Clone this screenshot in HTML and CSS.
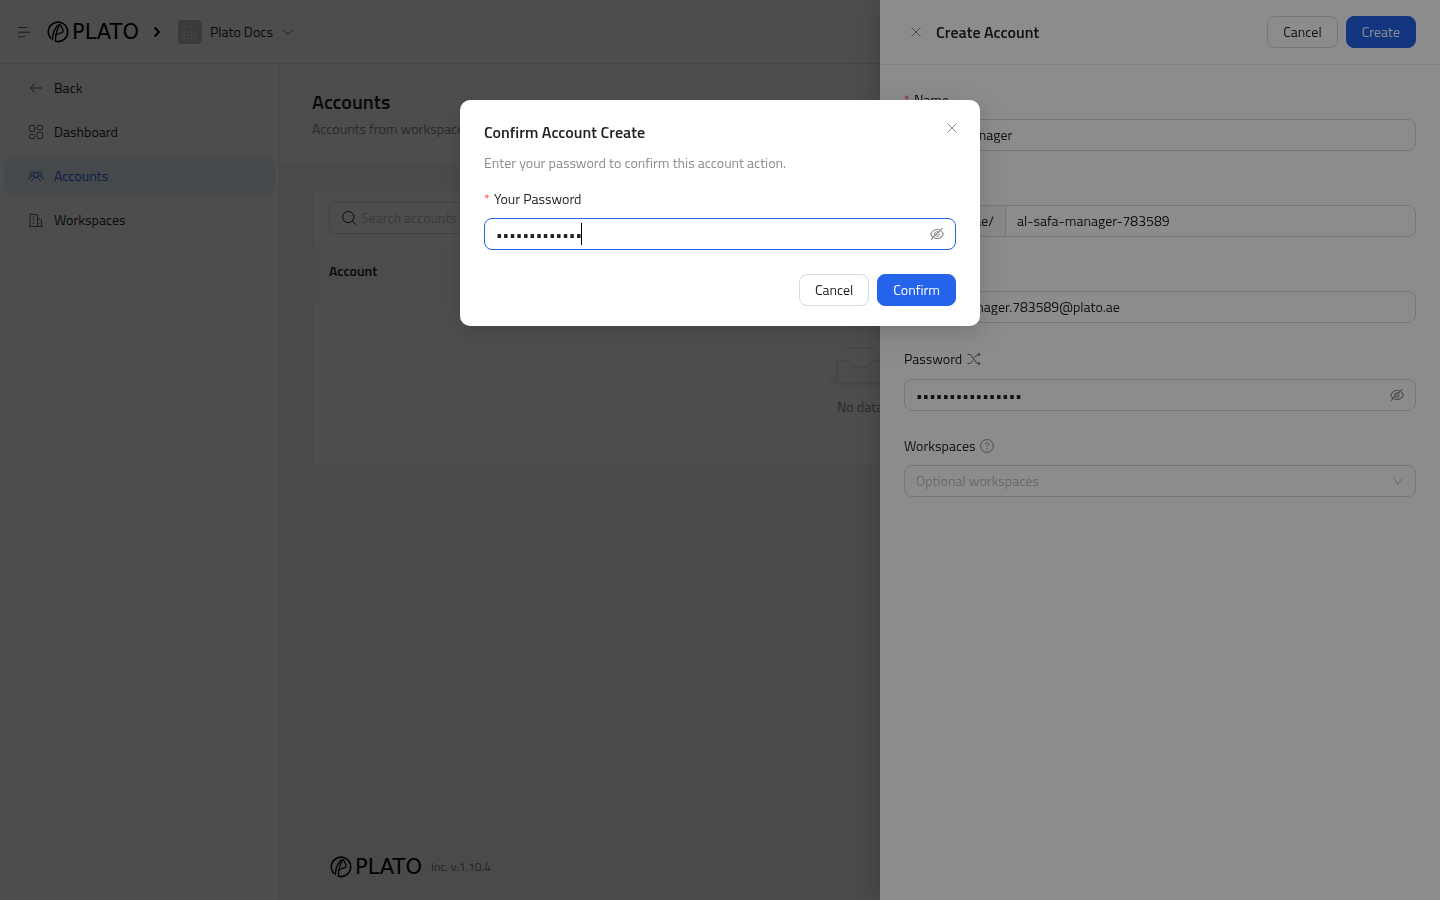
FILE: index.html
```html
<!DOCTYPE html>
<html lang="en">
<head>
<meta charset="utf-8">
<meta name="viewport" content="width=device-width, initial-scale=1">
<title>Plato – Accounts</title>
<link rel="stylesheet" href="styles.css">
</head>
<body>
<svg class="sprite" aria-hidden="true">
  <symbol id="mark" viewBox="0 0 22 22"><g fill="none" stroke="currentColor" stroke-linecap="round" stroke-linejoin="round"><path stroke-width="1.6" d="M3.600 17.200A9.700 9.700 0 1 1 8.600 20.300"/><path stroke-width="1.300" d="M5.400 18.600C5.400 15 6 11.500 8 8.200L10.300 4.800Q11 3.800 12.200 3.900L13 4Q13.800 4.100 14.200 5L16 9.200Q16.600 11 14.600 11.700L8.200 13.900M12.200 5.200C9.600 9 8.600 13.500 8.400 19.800"/></g></symbol>
  <symbol id="building" viewBox="0 0 16 16"><path d="M2 14.5V1.8L9.5 3v11.5M9.5 6.5l4 1.800v6.200M.8 14.500h14.400M4.500 5.200h2.200M4.500 8h2.200M4.500 11h2.200M11.600 11v1.200" fill="none" stroke="currentColor"/></symbol>
  <symbol id="close" viewBox="0 0 14 14"><path d="m2.500 2.500 9 9m0-9-9 9" fill="none" stroke="currentColor"/></symbol>
  <symbol id="chevron" viewBox="0 0 14 14"><path d="m2 4.500 5 5 5-5" fill="none" stroke="currentColor"/></symbol>
  <symbol id="eye-off" viewBox="64 64 896 896"><path fill="currentColor" d="M942.2 486.2Q889.47 375.11 816.7 305l-50.88 50.88C807.31 395.53 843.45 447.4 874.7 512 791.5 684.2 673.4 766 512 766q-72.67 0-133.87-22.38L323 798.75Q408 838 512 838q288.3 0 430.2-300.3a60.29 60.29 0 000-51.5zm-63.57-320.64L836 122.88a8 8 0 00-11.32 0L715.31 232.2Q624.86 186 512 186q-288.3 0-430.2 300.3a60.3 60.3 0 000 51.5q56.69 119.4 136.5 191.41L112.48 835a8 8 0 000 11.31L155.17 889a8 8 0 0011.31 0l712.15-712.12a8 8 0 000-11.32zM149.3 512C232.6 339.8 350.7 258 512 258c54.54 0 104.13 9.36 149.12 28.39l-70.3 70.3a176 176 0 00-238.13 238.13l-83.42 83.42C223.1 637.49 183.3 582.28 149.3 512zm246.7 0a112.11 112.11 0 01146.2-106.69L401.31 546.2A112 112 0 01396 512z"/><path fill="currentColor" d="M508 624c-3.46 0-6.87-.16-10.25-.47l-52.82 52.82a176.09 176.09 0 00227.42-227.42l-52.82 52.82c.31 3.38.47 6.79.47 10.25a111.94 111.94 0 01-112 112z"/></symbol>
</svg>

<div class="app">
  <header class="topbar">
    <button class="icon-button" aria-label="Toggle menu"><svg class="icon-16" viewBox="0 0 16 16"><path d="M2 3.5h9M2 8.2h12M2 12.8h7" fill="none" stroke="currentColor"/></svg></button>
    <a class="logo" href="#"><svg class="logo-mark"><use href="#mark"/></svg><span class="logo-word">PLATO</span></a>
    <svg class="crumb" viewBox="0 0 10 12"><path d="m2.5 1.5 4.5 4.5-4.500 4.500" fill="none" stroke="currentColor" stroke-width="2"/></svg>
    <button class="team"><span class="team-avatar"><svg class="icon-16"><use href="#building"/></svg></span>Plato Docs<svg class="icon-14 team-arrow"><use href="#chevron"/></svg></button>
  </header>
  <div class="columns">
    <nav class="sidebar">
      <a class="nav-item" href="#"><svg class="icon-16" viewBox="0 0 16 16"><path d="M2.500 8h11.500M7 3.500 2.500 8 7 12.500" fill="none" stroke="currentColor"/></svg>Back</a>
      <a class="nav-item" href="#"><svg class="icon-16" viewBox="0 0 16 16"><g fill="none" stroke="currentColor"><rect x="1.500" y="1.500" width="5" height="6" rx="1.200"/><rect x="9" y="1.500" width="5.500" height="4" rx="1.200"/><rect x="1.500" y="10.500" width="5" height="4" rx="1.200"/><rect x="9" y="8" width="5.500" height="6.500" rx="1.200"/></g></svg>Dashboard</a>
      <a class="nav-item nav-current" href="#"><svg class="icon-16" viewBox="0 0 16 16"><g fill="none" stroke="currentColor"><circle cx="8" cy="7" r="2.500"/><path d="M3.700 13.300c.4-2.500 2-3.800 4.300-3.800s3.900 1.300 4.300 3.800M5.900 4.500A2.100 2.100 0 1 0 4.300 7.900C2.200 8 1 9.400.7 11.500M10.100 4.500a2.100 2.100 0 1 1 1.600 3.400c2.100.1 3.300 1.500 3.600 3.600"/></g></svg>Accounts</a>
      <a class="nav-item" href="#"><svg class="icon-16"><use href="#building"/></svg>Workspaces</a>
    </nav>
    <main class="content">
      <div class="page-head">
        <h1 class="page-title">Accounts</h1>
        <p class="page-note">Accounts from workspaces</p>
      </div>
      <section class="card">
        <label class="search"><svg class="icon-16" viewBox="0 0 16 16"><path d="M7.300 1.500a5.600 5.600 0 1 0 0 11.200 5.600 5.600 0 0 0 0-11.200zM11.300 11.200l3.500 3.500" fill="none" stroke="currentColor"/></svg><input class="search-input" type="search" placeholder="Search accounts..." aria-label="Search accounts"></label>
        <table class="table">
          <thead><tr><th>Account</th></tr></thead>
          <tbody><tr><td>
            <div class="empty">
              <svg class="empty-art" viewBox="0 0 64 41"><g transform="translate(0 1)"><ellipse fill="#f5f5f5" cx="32" cy="33" rx="32" ry="7"/><g fill-rule="nonzero" stroke="#d9d9d9"><path fill="#fff" d="M55 12.760L44.854 1.258C44.367.474 43.656 0 42.907 0H21.093c-.749 0-1.460.474-1.947 1.257L9 12.761V22h46v-9.240z"/><path fill="#fafafa" d="M41.613 15.931c0-1.605.994-2.930 2.227-2.931H55v18.137C55 33.260 53.680 35 52.050 35h-40.100C10.320 35 9 33.259 9 31.137V13h11.160c1.233 0 2.227 1.323 2.227 2.928v.022c0 1.605 1.005 2.901 2.237 2.901h14.752c1.232 0 2.237-1.308 2.237-2.913v-.007z"/></g></g></svg>
              No data
            </div>
          </td></tr></tbody>
        </table>
      </section>
      <footer class="footer"><span class="logo"><svg class="logo-mark"><use href="#mark"/></svg><span class="logo-word">PLATO</span></span><span class="version">Inc. v.1.10.4</span></footer>
    </main>
  </div>
</div>

<div class="mask"></div>
<aside class="drawer" aria-labelledby="drawer-title">
  <header class="drawer-head">
    <button class="drawer-close" aria-label="Close"><svg class="icon-14"><use href="#close"/></svg></button>
    <h2 class="panel-title" id="drawer-title">Create Account</h2>
    <div class="actions"><button class="button">Cancel</button><button class="button button-primary">Create</button></div>
  </header>
  <form class="drawer-form">
    <div class="field">
      <label class="label required" for="name">Name</label>
      <input class="control" id="name" value="Al Safa Manager">
    </div>
    <div class="field">
      <label class="label required" for="username">Username</label>
      <div class="control-group"><span class="addon">my.plato.ae/</span><input class="control" id="username" value="al-safa-manager-783589"></div>
    </div>
    <div class="field">
      <label class="label required" for="email">Email</label>
      <input class="control" id="email" value="alsafa-manager.783589@plato.ae">
    </div>
    <div class="field">
      <div class="label-row"><label for="password">Password</label><button class="icon-button" type="button" aria-label="Generate password"><svg class="icon-14" viewBox="0 0 14 14"><path d="M.5 2.500h1.800c1 0 1.600.4 2.200 1.200l4.600 6.600c.6.800 1.200 1.200 2.200 1.200h1.500M.5 11.500h1.800c1 0 1.600-.4 2.200-1.200l1.200-1.700M8 5.400l1.200-1.700c.6-.8 1.200-1.200 2.200-1.200h1.500M11.300.8 13 2.500 11.300 4.200M11.300 9.800l1.700 1.700-1.700 1.700" fill="none" stroke="currentColor"/></svg></button></div>
      <div class="control secret"><input class="secret-input" id="password" type="password" value="plato-7835-safa1"><button class="icon-button eye" type="button" aria-label="Show password"><svg class="icon-14"><use href="#eye-off"/></svg></button></div>
    </div>
    <div class="field">
      <label class="label" for="workspaces">Workspaces <svg class="icon-14 help" viewBox="0 0 14 14"><g fill="none" stroke="currentColor"><circle cx="7" cy="7" r="6.400"/><path d="M5.300 5.700c0-1.100.7-1.800 1.700-1.800s1.700.7 1.700 1.600c0 1.300-1.700 1.300-1.700 2.700M7 9.300v1.100"/></g></svg></label>
      <div class="select-wrap"><select class="control select" id="workspaces"><option>Optional workspaces</option></select><svg class="icon-14 select-arrow" viewBox="0 0 14 14"><path d="m2.500 3.500 4.500 6.700 4.500-6.700" fill="none" stroke="currentColor"/></svg></div>
    </div>
  </form>
</aside>

<div class="mask modal-layer">
  <form class="modal" role="dialog" aria-labelledby="modal-title">
    <button class="modal-close" type="button" aria-label="Close"><svg class="icon-14"><use href="#close"/></svg></button>
    <h2 class="panel-title" id="modal-title">Confirm Account Create</h2>
    <p class="modal-note">Enter your password to confirm this account action.</p>
    <label class="label required" for="confirm">Your Password</label>
    <div class="control secret secret-focus"><input class="secret-input" id="confirm" type="password" value="plato-admin-1"><span class="caret"></span><button class="icon-button eye" type="button" aria-label="Show password"><svg class="icon-14"><use href="#eye-off"/></svg></button></div>
    <div class="modal-actions"><button class="button" type="button">Cancel</button><button class="button button-primary" type="button">Confirm</button></div>
  </form>
</div>
</body>
</html>
```
FILE: styles.css
```css
* { box-sizing: border-box; }

body {
  margin: 0;
  background: #fff;
  color: #1f1f1f;
  font: 14px/22px "Titillium Web", Lato, sans-serif;
}

h1, h2, p { margin: 0; }
a { color: inherit; text-decoration: none; }
button, input, select { font: inherit; color: inherit; }
svg { display: block; flex: none; }

.sprite { position: absolute; width: 0; height: 0; }
.icon-16 { width: 16px; height: 16px; }
.icon-14 { width: 14px; height: 14px; }

.icon-button {
  display: flex;
  padding: 0;
  border: 0;
  background: none;
  color: #595959;
}

/* Page frame */
.app { display: flex; flex-direction: column; min-height: 100vh; }

.topbar {
  display: flex;
  align-items: center;
  height: 64px;
  padding: 0 16px;
  border-bottom: 1px solid #e5e5e5;
}

.logo { display: flex; align-items: center; gap: 3px; color: #000; }
.topbar .logo { margin-left: 15px; }
.logo-mark { width: 22px; height: 22px; }
.logo-word { font: 21px/22px "DejaVu Sans", sans-serif; }
.crumb { width: 10px; height: 12px; margin: 0 16px 0 13px; color: #000; }

.team {
  display: flex;
  align-items: center;
  gap: 8px;
  padding: 0;
  border: 0;
  background: none;
}
.team-avatar {
  display: flex;
  align-items: center;
  justify-content: center;
  width: 24px;
  height: 24px;
  border-radius: 4px;
  background: #bfbfbf;
  color: #e5e5e5;
}
.team-arrow { color: #595959; }

.columns { display: flex; flex: 1; }

.sidebar {
  flex: 0 0 280px;
  display: flex;
  flex-direction: column;
  gap: 4px;
  padding: 4px;
  border-right: 1px solid #eaeaea;
}
.nav-item {
  display: flex;
  align-items: center;
  gap: 10px;
  height: 40px;
  padding: 0 24px;
  border-radius: 10px;
}
.nav-item svg { color: #595959; }
.nav-current { background: #e8f1f8; color: #2563eb; }
.nav-current svg { color: #2563eb; }

.content {
  flex: 1;
  display: flex;
  flex-direction: column;
  background: #f5f5f5;
}
.page-head {
  padding: 24px 32px;
  border-bottom: 1px solid #eee;
  background: #fff;
}
.page-title { font-size: 20px; line-height: 28px; font-weight: 600; }
.page-note { margin-top: 2px; color: #8c8c8c; }

.card {
  margin: 24px 32px;
  border: 1px solid #ededed;
  border-radius: 8px;
  background: #fff;
  overflow: hidden;
}
.search {
  display: flex;
  align-items: center;
  gap: 4px;
  width: 280px;
  height: 32px;
  margin: 12px 16px 10px;
  padding: 0 11px;
  border: 1px solid #d9d9d9;
  border-radius: 6px;
}
.search-input { flex: 1; min-width: 0; padding: 0; border: 0; background: none; outline: 0; }
.search-input::placeholder { color: #bfbfbf; }

.table { width: 100%; border-collapse: collapse; }
.table th {
  height: 55px;
  padding: 0 16px;
  border-bottom: 1px solid #f0f0f0;
  background: #fafafa;
  font-weight: 600;
  text-align: left;
}
.table td { padding: 47px 16px 48px; }
.empty {
  display: flex;
  flex-direction: column;
  align-items: center;
  gap: 8px;
  color: #8c8c8c;
}
.empty-art { width: 64px; height: 41px; }

.footer {
  display: flex;
  align-items: center;
  gap: 9px;
  margin-top: auto;
  padding: 0 50px 22px;
}
.version { color: #6b7280; font-size: 12px; }

/* Shared controls */
.panel-title { font-size: 16px; line-height: 24px; font-weight: 600; }

.button {
  height: 32px;
  padding: 0 15px;
  border: 1px solid #d9d9d9;
  border-radius: 8px;
  background: #fff;
}
.button-primary { border-color: #2563eb; background: #2563eb; color: #fff; }

.label { display: flex; align-items: center; gap: 4px; margin-bottom: 8px; }
.required::before { content: "*"; color: #ff4d4f; font-size: 14px; }
.help { color: #8c8c8c; }

.control {
  display: block;
  width: 100%;
  height: 32px;
  padding: 0 11px 2px;
  border: 1px solid #d9d9d9;
  border-radius: 8px;
  background: #fff;
  outline: 0;
}
.control-group { display: flex; }
.control-group .control { flex: 1; min-width: 0; border-radius: 0 8px 8px 0; }
.addon {
  flex: none;
  width: 101px;
  padding: 4px 11px;
  border: 1px solid #d9d9d9;
  border-right: 0;
  border-radius: 8px 0 0 8px;
  background: #fafafa;
  text-align: right;
}

.secret { position: relative; display: flex; align-items: center; padding: 0 11px; }
.secret-focus { border-color: #2563eb; }
.secret-input {
  flex: 1;
  min-width: 0;
  padding: 0;
  border: 0;
  background: none;
  outline: 0;
}
.eye { color: #8c8c8c; }
.caret {
  position: absolute;
  left: 96px;
  top: 4px;
  width: 1px;
  height: 22px;
  background: #000;
}

.select-wrap { position: relative; }
.select { appearance: none; padding: 0 11px; color: #bfbfbf; }
.select-arrow { position: absolute; right: 11px; top: 9px; color: #bfbfbf; pointer-events: none; }

/* Layers */
.mask { position: fixed; inset: 0; background: rgba(0, 0, 0, .45); }

.drawer {
  position: fixed;
  inset: 0 0 0 auto;
  width: 560px;
  max-width: 100%;
  background: #fff;
  box-shadow: -6px 0 16px rgba(0, 0, 0, .08), -9px 0 28px 8px rgba(0, 0, 0, .05);
}
.drawer-head {
  display: flex;
  align-items: center;
  padding: 16px 24px;
  border-bottom: 1px solid #e5e5e5;
}
.drawer-close {
  display: flex;
  margin-right: 8px;
  padding: 5px;
  border: 0;
  background: none;
  color: #8c8c8c;
}
.actions { display: flex; gap: 8px; margin-left: auto; }
.drawer-form { display: flex; flex-direction: column; gap: 24px; padding: 24px; }
.label-row { display: flex; align-items: center; gap: 5px; height: 24px; margin-bottom: 8px; }

.modal-layer { padding: 100px 16px 16px; }
.modal {
  position: relative;
  max-width: 520px;
  margin: 0 auto;
  padding: 20px 24px;
  border-radius: 10px;
  background: #fff;
  box-shadow: 0 6px 16px rgba(0, 0, 0, .08), 0 9px 28px 8px rgba(0, 0, 0, .05);
}
.modal-close {
  position: absolute;
  top: 17px;
  right: 17px;
  display: flex;
  padding: 4px;
  border: 0;
  background: none;
  color: #8c8c8c;
}
.modal-note { margin: 8px 0 14px; color: #8c8c8c; }
.modal-actions { display: flex; justify-content: flex-end; gap: 8px; margin-top: 24px; }
```
